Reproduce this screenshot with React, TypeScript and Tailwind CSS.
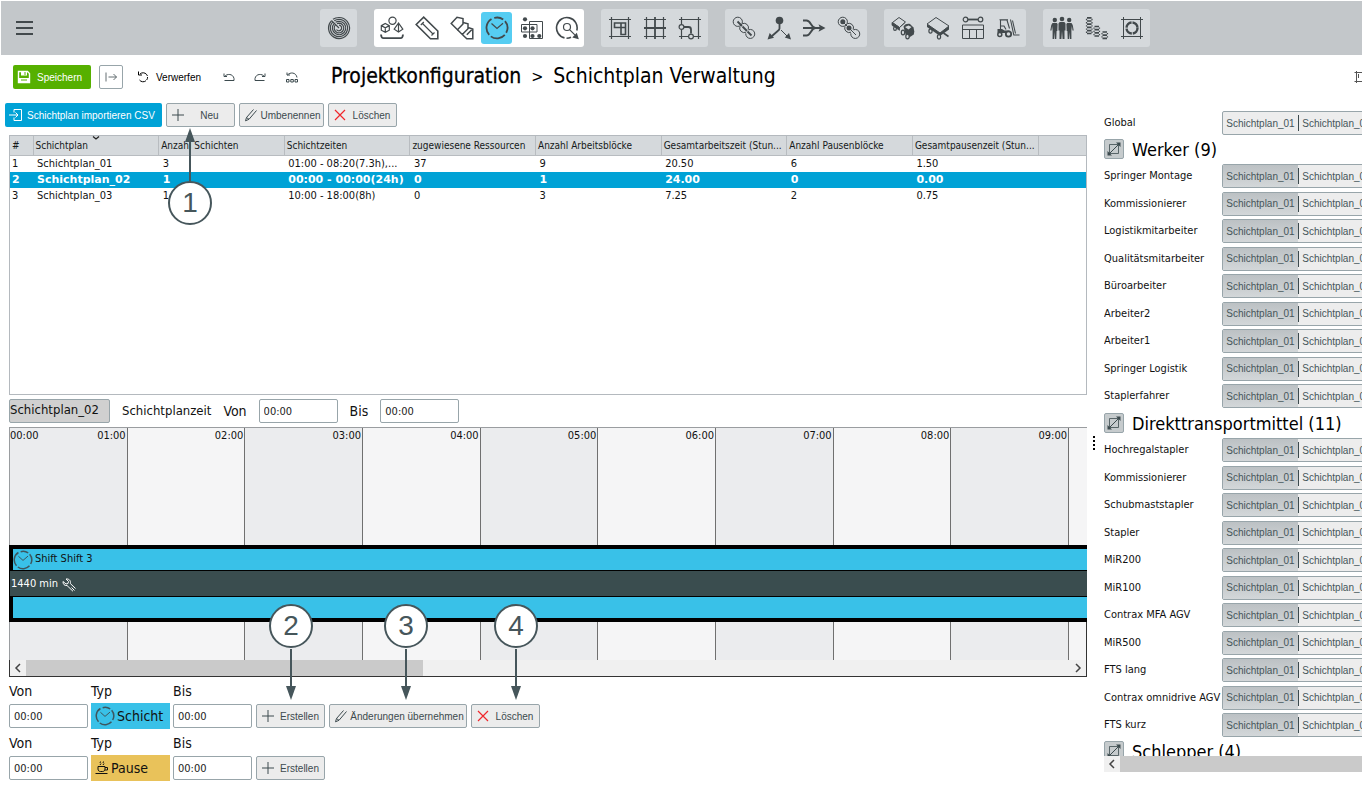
import { useState } from 'react';
import type { ReactNode } from 'react';
import clsx from 'clsx';

const ui = "font-['DejaVu_Sans_Condensed','DejaVu_Sans',sans-serif]";
const arial = "font-['Liberation_Sans',Arial,sans-serif]";
const outlined = 'rounded-[2px] border border-[#98a5aa]';

function Icon({ children, size = 'size-6' }: { children: ReactNode; size?: string }) {
  return (
    <svg viewBox="0 0 24 24" className={clsx('shrink-0', size)} fill="none" stroke="currentColor" strokeWidth="1.2" aria-hidden="true">
      {children}
    </svg>
  );
}

function SmallIcon({ children }: { children: ReactNode }) {
  return (
    <svg viewBox="0 0 14 14" className="size-3.5 shrink-0" fill="none" stroke="currentColor" aria-hidden="true">
      {children}
    </svg>
  );
}

const ClockShape = (
  <>
    <path d="M6.500 3A10.400 10.400 0 0 0 4.200 18.900M5.800 20.400A10.400 10.400 0 0 0 19.800 18.900M21.200 16.800A10.400 10.400 0 0 0 20 5.200M18.200 3.500A10.400 10.400 0 0 0 9.200 2" strokeWidth="1.800" />
    <path d="M6.500 7.500 12 12.500l6-5.200" />
  </>
);

const icons: Record<string, ReactNode> = {
  radar: (
    <>
      <path d="M4.600 4.600A10.500 10.500 0 1 0 12 1.500C9.500 1.500 7.500 2.200 6 3.300" />
      <path d="M5.900 5.900A8.600 8.600 0 1 0 12 3.400C10 3.400 8.500 4 7.300 4.800" />
      <path d="M7.300 7.300A6.700 6.700 0 1 0 12 5.300C10.600 5.300 9.500 5.700 8.600 6.300" />
      <path d="M8.600 8.600A4.800 4.800 0 1 0 12 7.200L10 7.700" />
      <path d="M9.500 13.500A2.800 2.800 0 1 0 12 9.200M4.600 4.600 12 12" />
    </>
  ),
  shapes: (
    <>
      <circle cx="12.500" cy="4.700" r="3.600" />
      <path d="M5.300 7.500 9.300 9.600v4.600l-4 2.100-4-2.100V9.600ZM1.300 9.600l4 2.100 4-2.100M5.300 11.700v4.600" />
      <path d="M18.500 7 14.200 13.200l4.300 2.800 4.300-2.800ZM18.500 7v9" />
      <path d="M1 18.500c.3 3.200 1 3.700 2.500 3.700h17c1.500 0 2.200-.5 2.500-3.700" strokeWidth="1.800" />
    </>
  ),
  ruler: (
    <>
      <path d="M1.200 8.500 8.700 1.200 22.800 15V22.800H15.500Z" strokeWidth="1.600" />
      <path d="M7.500 7.500 18 18M5.800 9l3-3M16.500 19.500l3-3" />
    </>
  ),
  cards: (
    <>
      <path d="M1.200 7.500 7 1.200l6 1.300v5.500L7.500 13.800Z" strokeWidth="1.500" />
      <path d="M13 6.500l5 1.300v5L12.300 18.500 7.500 13.800M18 11.500l4.800 1.500v9.800h-6L12.300 18.500M16.800 18.800l5.200-5.300" strokeWidth="1.500" />
    </>
  ),
  clock: ClockShape,
  dots: (
    <>
      <path d="M9.500 5.500h13v17h-13ZM1.500 8.500h15.500v7.500h-15.500Z" strokeWidth="1" />
      <g fill="currentColor" stroke="none">
        <circle cx="5" cy="3.300" r="2.100" />
        <circle cx="5" cy="12.300" r="2.100" />
        <circle cx="12.500" cy="12.300" r="2.100" />
        <circle cx="5" cy="20" r="2.100" />
        <circle cx="12.500" cy="20" r="2.100" />
        <circle cx="19.300" cy="20" r="2.100" />
      </g>
    </>
  ),
  inspect: (
    <>
      <path d="M9.500 21.900A10.300 10.300 0 1 1 21.800 14.500M11.500 22.300c1.800 0 3.200-.3 4.500-1" strokeWidth="1.600" />
      <circle cx="12" cy="11" r="3.500" />
      <path d="m14.800 13.800 5 5" />
      <path d="m23.800 23.300-6.500-1.800 4.500-4.700Z" fill="currentColor" stroke="none" />
    </>
  ),
  frame: (
    <>
      <path d="M3.500 1v22M20.500 1v22M1 3.500h22M1 20.500h22" />
      <path d="M6.500 7h11v11.500h-4.500V11.500H6.500ZM13 7v4.500h4.500" strokeWidth="1.600" />
    </>
  ),
  grid: (
    <>
      <path d="M3.500 1v22M20.500 1v22M1 3.500h22M1 20.500h22" />
      <path d="M12 1v22M1 12h22" strokeWidth="1.800" />
    </>
  ),
  route: (
    <>
      <path d="M3.500 1v7M3.500 14v9M20.500 1v22M1 3.500h22M1 20.500h9M16 20.500h7" />
      <circle cx="3.500" cy="11" r="2.400" />
      <circle cx="13" cy="20.500" r="2.400" />
      <path d="M6 11h4.500c2 0 2.500 1 2.500 2.500v4" strokeWidth="1.800" />
    </>
  ),
  chain: (
    <>
      <circle cx="5.800" cy="5.800" r="4.600" strokeWidth="1" />
      <path d="M10.200 7.700a4.500 4.500 0 0 1 6 5.800M14 16.200a4.500 4.500 0 0 1-6-5.800M16.500 13.800a4.500 4.500 0 1 1-2.700 3.500" strokeWidth="1" />
      <path d="m5.500 5.500 4.500 4.500M10.500 10.500l4.500 4.500M15.500 15.500l4 4" strokeWidth="1.800" />
    </>
  ),
  fork: (
    <>
      <circle cx="12.500" cy="4.500" r="3.800" fill="currentColor" stroke="none" />
      <path d="M12.500 7v5.500c0 1-.8 1.800-1.800 2.500L5 20" strokeWidth="1.800" />
      <path d="m14 14 6 6" strokeWidth="1" />
      <path d="m.5 23.500 2.200-6.500 4.300 4.800ZM24 23.500l-6.200-2 4.200-4.500Z" fill="currentColor" stroke="none" />
    </>
  ),
  merge: (
    <>
      <path d="M1 4.500h3.500c4.500 0 4.500 7.500 9 7.500M1 12h17M1 19.500h3.500c4.500 0 4.500-7.500 9-7.500" strokeWidth="1.900" />
      <path d="m23.500 12-7-3.700 1.500 3.700-1.500 3.700Z" fill="currentColor" stroke="none" />
    </>
  ),
  chainDots: (
    <>
      <circle cx="5.800" cy="5.800" r="4.600" strokeWidth="1" />
      <path d="M10.200 7.700a4.500 4.500 0 0 1 6 5.800M14 16.200a4.500 4.500 0 0 1-6-5.800M16.500 13.800a4.500 4.500 0 1 1-2.700 3.500" strokeWidth="1" />
      <circle cx="5.800" cy="5.800" r="2.500" fill="currentColor" stroke="none" />
      <circle cx="12" cy="12" r="2.500" fill="currentColor" stroke="none" />
      <path d="m6 6 13 13" strokeWidth="1" />
    </>
  ),
  trailerTruck: (
    <>
      <path d="M1.500 6.500 8 1.500 14.500 6 8.500 11.500Z" strokeWidth="1" />
      <path d="m1 6.500 7.500 5 0 2.800-7.500-5ZM8.500 11.500l5.500-5" fill="currentColor" strokeWidth=".8" />
      <path d="M12.500 10.500c1.500-2.500 4-3 6.500-2.500l3.500 3.500.8 4-.5 3-5 3.200-3-2.500Z" fill="currentColor" stroke="none" />
      <path d="m14 11 3.500-1.500 3 1.500-3 2.500Z" fill="#d5d9dc" stroke="none" />
      <ellipse cx="4" cy="12.500" rx="1.400" ry="1.900" />
      <ellipse cx="12" cy="16.500" rx="1.700" ry="2.300" />
      <ellipse cx="16.500" cy="20.500" rx="1.700" ry="2.300" fill="#d5d9dc" />
    </>
  ),
  trailer: (
    <>
      <path d="M1 8 10 1.500 23 10 14 17Z" strokeWidth="1" />
      <path d="m1 8 13 9v3L1 11Z" fill="currentColor" stroke="none" />
      <path d="m14 17 9-7v3.500L14 20Z" fill="currentColor" stroke="none" />
      <path d="m17.500 17 5 3.500" strokeWidth="1.600" />
      <ellipse cx="4.500" cy="15" rx="1.600" ry="2.200" />
      <ellipse cx="13" cy="20.800" rx="1.600" ry="2.200" fill="#d5d9dc" />
    </>
  ),
  station: (
    <>
      <circle cx="4.500" cy="3.500" r="2.300" />
      <circle cx="19.500" cy="3.500" r="2.300" />
      <path d="M7 3.500h10" strokeWidth="1.800" />
      <path d="M1.500 9h21v13.500h-21ZM1.500 13.500h21M8.500 13.500v9M15.500 13.500v9" strokeWidth="1" />
    </>
  ),
  forklift: (
    <>
      <path d="M4.500 13V4h6.500l2.500 8.500M3.500 3.800h8.500M4.500 10h3.500l2 3.500" strokeWidth="1.100" />
      <path d="M1.500 13h4.500l2.500 1.500h5v2.500H1.500Z" fill="currentColor" stroke="none" />
      <path d="M14.500 3.500 17.800 19H23.500M16.500 4.500l3 13" strokeWidth="1.100" />
      <circle cx="3.800" cy="18.500" r="2" fill="#d5d9dc" strokeWidth="1.500" />
      <circle cx="12.500" cy="18" r="2.700" fill="#d5d9dc" strokeWidth="1.800" />
    </>
  ),
  people: (
    <g fill="currentColor" stroke="none">
      <circle cx="4.800" cy="4" r="2.200" />
      <circle cx="12" cy="3" r="2.300" />
      <circle cx="19.200" cy="4" r="2.200" />
      <path d="M2.500 7h4.300l.8 1-.3 7h-.7l-.3 8H4.800l-.3-7-.5 7H2.600V14l-.5-4-.6 4.500H.3L1.300 9Z" />
      <path d="M21.500 7h-4.300l-.8 1 .3 7h.7l.3 8h1.500l.3-7 .5 7h1.400V14l.5-4 .6 4.500h1.200L22.700 9Z" />
      <path d="M9.700 6h4.600l1.200 1.500v7h-1V23h-1.900L12 15l-.6 8H9.500v-8.500h-1v-7Z" />
    </g>
  ),
  coins: (
    <>
      <path d="M2 1.800h4.500M2 5h4.500M2 8.200h4.500M2 11.400h4.500M2 14.600h4.500M2 17.500h4.500M9.500 10.500H14M9.500 13.700H14M9.500 16.900H14M9.500 20H14M17.500 16H22M17.500 19.200H22M17.500 22.400H22" strokeWidth="1.700" />
      <path d="M1.500 2.800v1.400M1.500 6v1.400M1.500 9.200v1.400M1.500 12.400v1.400M1.500 15.600V17M7 2.800v1.400M7 6v1.400M7 9.200v1.400M7 12.400v1.400M7 15.600V17M9 11.500v1.300M9 14.700V16M9 17.900v1.300M14.500 11.500v1.300M14.500 14.700V16M14.500 17.900v1.300M17 17v1.300M17 20.200v1.300M22.500 17v1.300M22.500 20.200v1.300" />
    </>
  ),
  utilisation: (
    <>
      <path d="M3.500 1v22M20.500 1v22M1 3.500h22M1 20.500h22" strokeWidth="1" />
      <circle cx="12" cy="12" r="5.500" strokeWidth="2.400" strokeDasharray="7.600 1" />
    </>
  ),
};

const groups = [
  ['radar'],
  ['shapes', 'ruler', 'cards', 'clock', 'dots', 'inspect'],
  ['frame', 'grid', 'route'],
  ['chain', 'fork', 'merge', 'chainDots'],
  ['trailerTruck', 'trailer', 'station', 'forklift'],
  ['people', 'coins', 'utilisation'],
];

const Plus = (
  <SmallIcon>
    <path d="M7 1v12M1 7h12" />
  </SmallIcon>
);
const Pencil = (
  <SmallIcon>
    <path d="M1.500 12.800 2.500 9.500 9.500 1.500M1.500 12.800 5 11.300 12.500 2.500M2.500 9.500 5 11.300" />
  </SmallIcon>
);
const Cross = (
  <span className="flex text-[#f0262b]">
    <SmallIcon>
      <path d="m2 2 10 10M12 2 2 12" strokeWidth="1.200" />
    </SmallIcon>
  </span>
);

function ActionButton({ icon, children, width }: { icon: ReactNode; children: ReactNode; width: string }) {
  return (
    <button
      type="button"
      className={clsx(outlined, arial, width, 'flex h-6 shrink-0 items-center whitespace-nowrap bg-[#ececec] pl-1 text-[10px] text-[#3c4a4e]')}
    >
      {icon}
      <span className="flex-1 text-center">{children}</span>
    </button>
  );
}

/* Numbered marker with an arrow that points at the button it is placed in. */
function Callout({ n, up, className }: { n: number; up?: boolean; className: string }) {
  return (
    <svg viewBox="0 0 46 100" className={clsx('pointer-events-none absolute z-10 h-[100px] w-[46px]', className)} fill="none" stroke="#46565b" strokeWidth="2" aria-hidden="true">
      {up ? <path d="M23 54V6" /> : <path d="M23 45v44" />}
      {up ? <path d="M23 1l5 14H18Z" fill="#46565b" stroke="none" /> : <path d="M23 96l5-14H18Z" fill="#46565b" stroke="none" />}
      <circle cx="23" cy={up ? 76 : 22} r="21" fill="#fff" />
      <text x="23" y={up ? 85 : 31} textAnchor="middle" className={clsx(arial, 'text-[28px]')} fill="#46565b" stroke="none">
        {n}
      </text>
    </svg>
  );
}

function TimeInput({ id }: { id: string }) {
  return <input id={id} defaultValue="00:00" className={clsx(outlined, 'h-6 w-[79px] bg-white px-1 text-[11px] text-[#222]')} />;
}

const columns = [
  'Schichtplan',
  'Anzahl Schichten',
  'Schichtzeiten',
  'zugewiesene Ressourcen',
  'Anzahl Arbeitsblöcke',
  'Gesamtarbeitszeit (Stun...',
  'Anzahl Pausenblöcke',
  'Gesamtpausenzeit (Stun...',
];

const plans = [
  ['Schichtplan_01', '3', '01:00 - 08:20(7.3h),...', '37', '9', '20.50', '6', '1.50'],
  ['Schichtplan_02', '1', '00:00 - 00:00(24h)', '0', '1', '24.00', '0', '0.00'],
  ['Schichtplan_03', '1', '10:00 - 18:00(8h)', '0', '3', '7.25', '2', '0.75'],
];

function PlanTable() {
  const [selected, setSelected] = useState(1);
  return (
    <div className="mt-2 ml-[9px] h-[260px] border border-[#b4b9be]">
      <table className="w-full table-fixed border-collapse text-left">
        <thead>
          <tr className="h-[19px] bg-[#d5d9dc] text-[10px] text-[#16191a]">
            <th className="w-[23px] border-r border-b border-[#b8bcc0] p-0 pl-0.5 font-normal">#</th>
            {columns.map((c, i) => (
              <th key={c} className="relative border-r border-b border-[#b8bcc0] p-0 pl-0.5 font-normal whitespace-nowrap">
                {c}
                {i === 0 && (
                  <svg viewBox="0 0 8 4" className="absolute top-0 left-[58px] h-1 w-2" fill="none" stroke="#222" aria-hidden="true">
                    <path d="m1 .5 3 2.500 3-2.500" strokeWidth="1.300" />
                  </svg>
                )}
              </th>
            ))}
            <th className="w-[48px] border-b border-[#b8bcc0] p-0" />
          </tr>
        </thead>
        <tbody>
          {plans.map((row, i) => (
            <tr
              key={row[0]}
              onClick={() => setSelected(i)}
              className={clsx('h-4 text-[11px] leading-4', i === selected ? "bg-[#00a2d6] font-['DejaVu_Sans',sans-serif] font-bold text-white" : 'text-[#111]')}
            >
              <td className="p-0 pl-0.5">{i + 1}</td>
              {row.map((cell, j) => (
                <td key={columns[j]} className="p-0 pl-1 whitespace-nowrap">
                  {cell}
                </td>
              ))}
              <td />
            </tr>
          ))}
        </tbody>
      </table>
    </div>
  );
}

const hours = ['01:00', '02:00', '03:00', '04:00', '05:00', '06:00', '07:00', '08:00', '09:00'];

function Lanes({ height, labels }: { height: string; labels?: boolean }) {
  return (
    <div className={clsx('grid grid-cols-[repeat(9,minmax(0,1fr))_18px] border-l border-[#9a9da0] text-[11px] leading-4 text-[#111]', height)}>
      {hours.map((h, i) => (
        <div key={h} className={clsx('flex justify-between border-r border-[#707070] pr-px', i % 2 ? 'bg-[#f5f5f6]' : 'bg-[#ebecee]')}>
          <span>{labels && i === 0 && '00:00'}</span>
          {labels && <span>{h}</span>}
        </div>
      ))}
      <div className={clsx('bg-[#f5f5f6]', !labels && 'border-r border-[#333]')} />
    </div>
  );
}

function Timeline() {
  return (
    <div className="ml-[9px] border-t border-[#9a9da0]">
      <Lanes height="h-[117px]" labels />
      <div className="border-y-4 border-black text-[11px]">
        <div className="flex h-[22px] items-center gap-0.5 border-b border-l-4 border-black bg-[#39c1e8] text-[#111]">
          <span className="flex text-[#3e565e]">
            <Icon size="size-5">{ClockShape}</Icon>
          </span>
          Shift Shift 3
        </div>
        <div className="flex h-[26px] items-center gap-1 border-b border-l border-black bg-[#3a4d4f] pt-0.5 pl-px text-white">
          1440 min
          <SmallIcon>
            <path d="M4 1 6.500 3.500 6 5.500 4 6 1 3.500C.8 6 2.500 8 5 7.500L11 13.300M4 1C7 .6 9 2.500 8.300 5.500L13.500 10.500M9.500 9.500l3 3" />
          </SmallIcon>
        </div>
        <div className="h-[21px] border-l-4 border-black bg-[#39c1e8]" />
      </div>
      <div className="border-b border-[#333]">
        <Lanes height="h-[38px]" />
        <div className="flex h-4 items-center border-x border-[#333] bg-[#f0f0f0]">
          <ScrollArrow d="M6 1 2 5l4 4" />
          <div className="h-full w-[397px] bg-[#cacaca]" />
          <div className="flex-1" />
          <ScrollArrow d="m2 1 4 4-4 4" />
        </div>
      </div>
    </div>
  );
}

function ScrollArrow({ d }: { d: string }) {
  return (
    <button type="button" aria-label="Scroll" className="flex h-4 w-4 shrink-0 items-center justify-center bg-[#f0f0f0]">
      <svg viewBox="0 0 8 10" className="h-2.5 w-2" fill="none" stroke="#444" strokeWidth="1.500">
        <path d={d} />
      </svg>
    </button>
  );
}

function BlockForm({ name, type, children }: { name: string; type: ReactNode; children: ReactNode }) {
  return (
    <div className="mt-1 ml-[9px] flex items-end gap-[3px] text-[14px] text-[#111]">
      <div className="flex w-[79px] flex-col gap-[3px] pb-px">
        <label htmlFor={`${name}-von`} className="h-5 leading-5">Von</label>
        <TimeInput id={`${name}-von`} />
      </div>
      <div className="flex w-[79px] flex-col gap-0.5">
        <span className="h-5 leading-5">Typ</span>
        {type}
      </div>
      <div className="flex w-[79px] flex-col gap-[3px] pb-px">
        <label htmlFor={`${name}-bis`} className="h-5 leading-5">Bis</label>
        <TimeInput id={`${name}-bis`} />
      </div>
      <div className="ml-px flex gap-1 pb-px">{children}</div>
    </div>
  );
}

const workers = ['Springer Montage', 'Kommissionierer', 'Logistikmitarbeiter', 'Qualitätsmitarbeiter', 'Büroarbeiter', 'Arbeiter2', 'Arbeiter1', 'Springer Logistik', 'Staplerfahrer'];
const transports = ['Hochregalstapler', 'Kommissionierer', 'Schubmaststapler', 'Stapler', 'MiR200', 'MiR100', 'Contrax MFA AGV', 'MiR500', 'FTS lang', 'Contrax omnidrive AGV', 'FTS kurz'];

function ResourceRow({ name, assigned = true }: { name: string; assigned?: boolean }) {
  return (
    <div className="flex h-6 items-center whitespace-nowrap text-[11px] text-[#111]">
      <span className="w-[118px] shrink-0 pt-px">{name}</span>
      <div className={clsx(outlined, arial, 'flex h-6 w-[260px] shrink-0 items-center overflow-hidden bg-[#ededed] text-[10px] text-[#46555a]')}>
        <button type="button" aria-pressed={assigned} className={clsx('h-full w-[75px]', assigned && 'bg-linear-to-b from-[#bcc1c4] to-[#d3d7d9]')}>
          Schichtplan_01
        </button>
        <span className="h-4 w-px bg-[#3c4a4e]" />
        <button type="button" aria-pressed={false} className="h-full w-[75px]">
          Schichtplan_02
        </button>
        <span className="h-4 w-px bg-[#3c4a4e]" />
      </div>
    </div>
  );
}

function GroupHeading({ children }: { children: ReactNode }) {
  return (
    <div className="flex items-center gap-2 whitespace-nowrap">
      <button type="button" aria-label="Ausklappen" className={clsx(outlined, 'flex size-5 shrink-0 items-center justify-center bg-[#c6cbcd] text-[#3c4a4e]')}>
        <SmallIcon>
          <path d="M2.500 2.500h9v9h-9Z" strokeWidth=".8" />
          <path d="m2 12 10-10" />
          <path d="M13.500.5v4.500L9 .5ZM.5 13.500V9L5 13.500Z" fill="currentColor" stroke="none" />
        </SmallIcon>
      </button>
      <h2 className="pt-0.5 text-[18px] leading-5 text-black">{children}</h2>
    </div>
  );
}

function ResourcePanel() {
  return (
    <aside className="w-[258px] shrink-0 overflow-hidden pt-2">
      <div className="h-[645px] overflow-hidden">
        <ResourceRow name="Global" assigned={false} />
        <div className="mt-[3px] mb-1">
          <GroupHeading>Werker (9)</GroupHeading>
        </div>
        <div className="flex h-[244px] flex-col justify-between">
          {workers.map((w) => (
            <ResourceRow key={w} name={w} />
          ))}
        </div>
        <div className="mt-1 mb-1">
          <GroupHeading>Direkttransportmittel (11)</GroupHeading>
        </div>
        <div className="flex h-[299px] flex-col justify-between">
          {transports.map((t) => (
            <ResourceRow key={t} name={t} />
          ))}
        </div>
        <div className="mt-[3px]">
          <GroupHeading>Schlepper (4)</GroupHeading>
        </div>
      </div>
      <div className="flex h-4">
        <ScrollArrow d="M6 1 2 5l4 4" />
        <div className="flex-1 bg-[#cacaca]" />
      </div>
    </aside>
  );
}

function Toolbar() {
  return (
    <div className={clsx(arial, 'flex h-12 items-start pt-2.5 pl-3 text-[10px]')}>
      <div className="flex h-6 flex-1 items-center text-[#3c4a4e]">
        <button type="button" className="flex h-6 w-[78px] items-center gap-1.5 rounded-[2px] bg-[#56b000] pl-1 text-white">
          <SmallIcon>
            <path d="M1.500 1.500h9l2 2v9h-11Z" strokeWidth="1.400" />
            <path d="M4 1.500h6v4H4ZM1.500 8h11v4.500h-11Z" fill="currentColor" stroke="none" />
            <path d="M8 2v3M4 10h6" stroke="#56b000" />
          </SmallIcon>
          Speichern
        </button>
        <button type="button" aria-label="Schließen" className={clsx(outlined, 'ml-2 flex size-6 items-center justify-center')}>
          <SmallIcon>
            <path d="M2 2.500v9M4.500 7h8M9.500 4l3 3-3 3" strokeWidth=".8" />
          </SmallIcon>
        </button>
        <button type="button" className="ml-[13px] flex items-center gap-1.5 text-black">
          <SmallIcon>
            <path d="M4 4a4.500 4.500 0 1 1-.5 6M2.500 1.500v3.500H6" strokeDasharray="9 1 3 1 20" />
          </SmallIcon>
          Verwerfen
        </button>
        <button type="button" aria-label="Rückgängig" className="ml-[21px]">
          <SmallIcon>
            <path d="M2 3.500v3h3M2.500 6.500C5 3.500 11 3.500 12 8.500v2H2.500" />
          </SmallIcon>
        </button>
        <button type="button" aria-label="Wiederholen" className="ml-[17px]">
          <SmallIcon>
            <path d="M12 3.500v3H9M11.500 6.500C9 3.500 3 3.500 2 8.500v2h9.500" />
          </SmallIcon>
        </button>
        <button type="button" aria-label="Alles rückgängig" className="ml-[18px]">
          <SmallIcon>
            <path d="M2 2.500V5h3M2.500 5C5 2 11 2 12 7.500M1.500 9.500H4V12H1.500ZM5.800 9.500h2.500V12H5.800ZM10 9.500h2.500V12H10Z" />
          </SmallIcon>
        </button>
        <h1 className={clsx(ui, 'ml-8 flex items-center gap-2.5 text-[21px] whitespace-nowrap text-black')}>
          <span className="[-webkit-text-stroke:0.3px_black]">Projektkonfiguration</span>
          <span className="text-[16px]">&gt;</span>
          <span>Schichtplan Verwaltung</span>
        </h1>
      </div>
      <div className="flex h-6 w-2 items-center overflow-hidden text-[#555]">
        <SmallIcon>
          <path d="M2.500 1v12M11.500 1v12M.5 2.500h13M.5 11.500h13M4.500 4v4" />
        </SmallIcon>
      </div>
    </div>
  );
}

export default function App() {
  const [active, setActive] = useState('clock');

  return (
    <div className={clsx(ui, 'min-h-screen overflow-hidden bg-white pt-px pr-[3px] pl-px')}>
      <header className="flex h-[54px] items-center bg-[#c3c7ca] pl-[15px] text-[#42494c]">
        <button type="button" aria-label="Menü" className="flex flex-col gap-1">
          <span className="h-0.5 w-[17px] bg-current" />
          <span className="h-0.5 w-[17px] bg-current" />
          <span className="h-0.5 w-[17px] bg-current" />
        </button>
        <nav className="ml-[287px] flex gap-[17px]">
          {groups.map((group) => (
            <div
              key={group[0]}
              className={clsx('flex h-[38px] items-center rounded-[3px]', group.includes(active) ? 'bg-white' : 'bg-[#d5d9dc] px-px')}
            >
              {group.map((name) => (
                <button
                  key={name}
                  type="button"
                  aria-label={name}
                  onClick={() => setActive(name)}
                  className={clsx('mx-0.5 flex h-8 w-[31px] items-center justify-center rounded-[3px]', name === active && 'bg-[#56cdf2]')}
                >
                  <Icon>{icons[name]}</Icon>
                </button>
              ))}
            </div>
          ))}
        </nav>
      </header>

      <Toolbar />

      <main className="-ml-px flex">
        <section className="min-w-0 flex-1">
          <div className="flex gap-1 pl-[5px]">
            <button type="button" className={clsx(arial, 'flex h-6 w-[157px] items-center gap-1 rounded-[2px] bg-[#00a2d6] pl-1 text-[10px] whitespace-nowrap text-white')}>
              <SmallIcon>
                <path d="M5 4.500v-3h7.500v11H5v-3M0 7h9M6.500 4.500 9 7 6.500 9.500" />
              </SmallIcon>
              Schichtplan importieren CSV
            </button>
            <div className="relative">
              <ActionButton icon={Plus} width="w-[69px]">Neu</ActionButton>
              <Callout n={1} up className="top-full left-px" />
            </div>
            <ActionButton icon={Pencil} width="w-[85px]">Umbenennen</ActionButton>
            <ActionButton icon={Cross} width="w-[69px]">Löschen</ActionButton>
          </div>

          <PlanTable />

          <div className="my-1 ml-[9px] flex h-6 items-center gap-3 text-[13px] text-[#111]">
            <div className={clsx(outlined, 'h-6 w-[101px] bg-[#d0d0d0] leading-5')}>Schichtplan_02</div>
            <span>Schichtplanzeit</span>
            <label htmlFor="plan-von" className="text-[14px]">Von</label>
            <TimeInput id="plan-von" />
            <label htmlFor="plan-bis" className="text-[14px]">Bis</label>
            <TimeInput id="plan-bis" />
          </div>

          <Timeline />

          <BlockForm
            name="schicht"
            type={
              <div className="flex h-[26px] items-center gap-0.5 bg-[#39c1e8] pl-1">
                <span className="flex text-[#3e565e]">
                  <Icon size="size-5">{ClockShape}</Icon>
                </span>
                Schicht
              </div>
            }
          >
            <div className="relative">
              <ActionButton icon={Plus} width="w-[69px]">Erstellen</ActionButton>
              <Callout n={2} className="bottom-full left-3" />
            </div>
            <div className="relative">
              <ActionButton icon={Pencil} width="w-[138px]">Änderungen übernehmen</ActionButton>
              <Callout n={3} className="bottom-full left-[54px]" />
            </div>
            <div className="relative">
              <ActionButton icon={Cross} width="w-[69px]">Löschen</ActionButton>
              <Callout n={4} className="bottom-full left-[22px]" />
            </div>
          </BlockForm>

          <BlockForm
            name="pause"
            type={
              <div className="flex h-[26px] items-center gap-0.5 bg-[#e9c25a] pl-1">
                <SmallIcon>
                  <path d="M3 5.500h7v2.500c0 1.500-1 2.500-2.500 2.500H5.500C4 10.500 3 9.500 3 8ZM10 6.500h2.500V9H10M.5 12.500h12M5 4l1-1.500M5.500.5 5 2M8 4l1-1.500M8.500.5 8 2" />
                </SmallIcon>
                Pause
              </div>
            }
          >
            <ActionButton icon={Plus} width="w-[69px]">Erstellen</ActionButton>
          </BlockForm>
        </section>

        <div className="flex w-[17px] shrink-0 flex-col items-center gap-0.5 pt-[333px] pr-1">
          <span className="size-0.5 bg-black" />
          <span className="size-0.5 bg-black" />
          <span className="size-0.5 bg-black" />
          <span className="size-0.5 bg-black" />
        </div>

        <ResourcePanel />
      </main>
    </div>
  );
}
